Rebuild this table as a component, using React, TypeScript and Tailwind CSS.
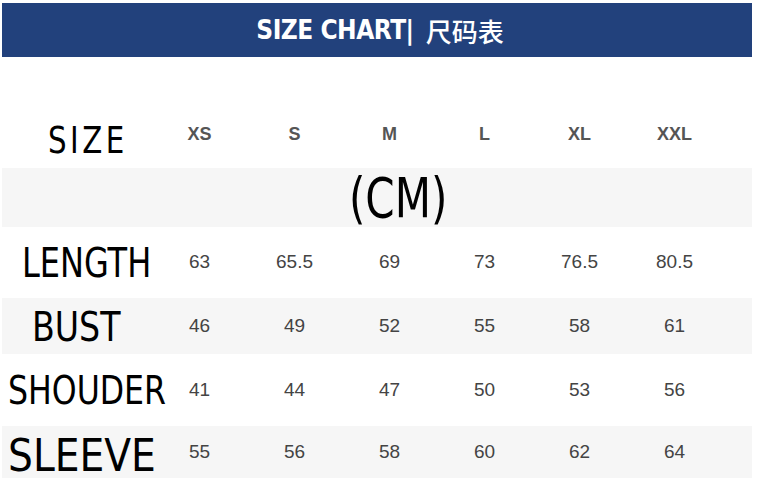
const sizes = ["XS", "S", "M", "L", "XL", "XXL"];

const rows = [
  { label: "LENGTH", values: ["63", "65.5", "69", "73", "76.5", "80.5"], h: "h-[71px]", gray: false, pad: "pl-[20px]", text: "text-[40px] scale-x-[0.89]" },
  { label: "BUST", values: ["46", "49", "52", "55", "58", "61"], h: "h-[56px]", gray: true, pad: "pl-[30px] pt-[2px]", text: "text-[41px] scale-x-[0.9]" },
  { label: "SHOUDER", values: ["41", "44", "47", "50", "53", "56"], h: "h-[72px]", gray: false, pad: "pl-[6px]", text: "text-[39px] scale-x-[0.9]" },
  { label: "SLEEVE", values: ["55", "56", "58", "60", "62", "64"], h: "h-[52px]", gray: true, pad: "pl-[6px] pt-[8px]", text: "text-[44px] scale-x-[0.99]" },
];

const condensed = "font-['DejaVu_Sans_Condensed',sans-serif]";

export default function App() {
  return (
    <div className="w-[758px] h-[485px] bg-white overflow-hidden">
      {/* Banner */}
      <div className="mx-[2px] mt-[3px] w-[750px] h-[54px] bg-[#22417c] flex items-center justify-center gap-[12px] text-white pl-[6px]">
        <span className="font-['DejaVu_Sans_Condensed',sans-serif] font-bold text-[26px] tracking-[-0.5px]">SIZE CHART|</span>
        <span className="font-['Noto_Sans_CJK_SC',sans-serif] font-medium text-[26px]">尺码表</span>
      </div>

      <div className="mt-[48px] mx-[2px] w-[750px]">
        {/* Size header */}
        <div className="grid grid-cols-[150px_repeat(6,95px)] h-[63px] items-center">
          <div className="pl-[46px] pt-[8px]">
            <span className={`${condensed} inline-block origin-left scale-x-[0.88] text-[37px] tracking-[4px] text-black leading-none`}>SIZE</span>
          </div>
          {sizes.map((s) => (
            <div key={s} className="text-center font-['Liberation_Sans',Arial,sans-serif] font-bold text-[18px] text-[#555] pb-[4px]">
              {s}
            </div>
          ))}
        </div>

        {/* Unit row */}
        <div className="h-[59px] bg-[#f6f6f6] flex items-center justify-center">
          <span className={`${condensed} inline-block scale-x-[0.85] text-[55px] text-black leading-none pl-[50px] pt-[2px]`}>(CM)</span>
        </div>

        {rows.map((r) => (
          <div
            key={r.label}
            className={`grid grid-cols-[150px_repeat(6,95px)] items-center ${r.h} ${r.gray ? "bg-[#f6f6f6]" : "bg-white"}`}
          >
            <div className={`${r.pad} whitespace-nowrap`}>
              <span className={`${condensed} ${r.text} inline-block origin-left text-black leading-none`}>{r.label}</span>
            </div>
            {r.values.map((v, i) => (
              <div key={i} className="text-center font-['Liberation_Sans',Arial,sans-serif] text-[19px] text-[#444]">
                {v}
              </div>
            ))}
          </div>
        ))}
      </div>
    </div>
  );
}
